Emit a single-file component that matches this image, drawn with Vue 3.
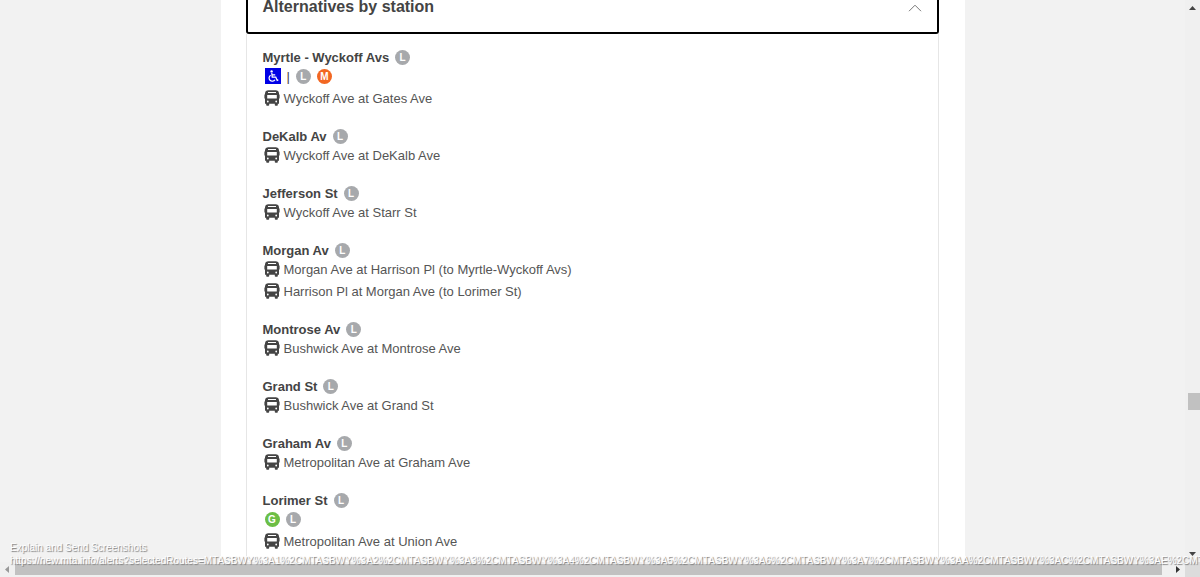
<template>
  <div class="window">
    <main class="viewport">
      <div class="page">
        <section class="accordion">
          <button class="accordion-header" type="button" :aria-expanded="open" @click="toggle">
            <span class="accordion-title">Alternatives by station</span>
            <svg class="chevron" :class="{ closed: !open }" viewBox="0 0 14 8" aria-hidden="true">
              <path d="M1 7.2 L7 1.2 L13 7.2" fill="none" stroke="#777" stroke-width="1" />
            </svg>
          </button>

          <div v-if="open" class="accordion-body">
            <article v-for="station in stations" :key="station.name" class="station">
              <h3 class="station-name">
                {{ station.name }}
                <span class="route line-l">L</span>
              </h3>
              <div v-if="station.transfers" class="transfers">
                <template v-if="station.accessible">
                  <svg class="accessible" viewBox="0 0 16 16" role="img" aria-label="Accessible">
                    <rect width="16" height="16" fill="#0000e6" />
                    <circle cx="6.6" cy="3.4" r="1.2" fill="#fff" />
                    <path
                      d="M6.8 5 L7.2 9.2 H10.8 L12.2 12.4 L13.3 11.9 M7 6.9 H10.2"
                      fill="none"
                      stroke="#fff"
                      stroke-width="1.2"
                    />
                    <path
                      d="M5.6 7.3 A3.2 3.2 0 1 0 10 11.7"
                      fill="none"
                      stroke="#fff"
                      stroke-width="1.2"
                    />
                  </svg>
                  <span class="divider">|</span>
                </template>
                <span
                  v-for="route in station.transfers"
                  :key="route"
                  class="route"
                  :class="`line-${route.toLowerCase()}`"
                >{{ route }}</span>
              </div>
              <p v-for="stop in station.stops" :key="stop" class="stop">
                <svg class="bus" viewBox="0 0 16 16" aria-hidden="true">
                  <path
                    fill="#444"
                    fill-rule="evenodd"
                    d="M4 0.3 H12 Q14.8 0.6 15 3 V4.5 H15.6 V8.5 H15 V13.8 H13.8 V15 Q13.8 15.8 13 15.8 H11.6 Q10.8 15.8 10.8 15 V13.8 H5.2 V15 Q5.2 15.8 4.4 15.8 H3 Q2.2 15.8 2.2 15 V13.8 H1 V8.5 H0.4 V4.5 H1 V3 Q1.2 0.6 4 0.3 Z M4 1.9 V2.9 H12 V1.9 Z M3.2 5 V8.6 H12.8 V5 Z M3.8 10.6 A0.9 0.9 0 1 0 3.8 12.4 A0.9 0.9 0 1 0 3.8 10.6 Z M12.2 10.6 A0.9 0.9 0 1 0 12.2 12.4 A0.9 0.9 0 1 0 12.2 10.6 Z"
                  />
                </svg>
                <span>{{ stop }}</span>
              </p>
            </article>
          </div>
        </section>
      </div>
    </main>

    <div class="scroll-y" aria-hidden="true">
      <svg class="arrow" viewBox="0 0 15 15"><path d="M4 10 L7.5 6 L11 10 Z" fill="#444" /></svg>
      <div class="track-y">
        <div class="thumb-y"></div>
      </div>
      <svg class="arrow" viewBox="0 0 15 15"><path d="M4 5 L7.5 9 L11 5 Z" fill="#444" /></svg>
    </div>

    <div class="scroll-x" aria-hidden="true">
      <svg class="arrow" viewBox="0 0 15 15"><path d="M9 4 L5 7.5 L9 11 Z" fill="#999" /></svg>
      <div class="thumb-x"></div>
      <svg class="arrow" viewBox="0 0 15 15"><path d="M6 4 L10 7.5 L6 11 Z" fill="#333" /></svg>
    </div>
    <div class="corner"></div>

    <div class="caption">
      <div>Explain and Send Screenshots</div>
      <div>{{ pageUrl }}</div>
    </div>
  </div>
</template>

<script setup>
import { ref } from 'vue';

const open = ref(true);

const toggle = () => {
  open.value = !open.value;
};

const stations = [
  {
    name: 'Myrtle - Wyckoff Avs',
    accessible: true,
    transfers: ['L', 'M'],
    stops: ['Wyckoff Ave at Gates Ave']
  },
  { name: 'DeKalb Av', stops: ['Wyckoff Ave at DeKalb Ave'] },
  { name: 'Jefferson St', stops: ['Wyckoff Ave at Starr St'] },
  {
    name: 'Morgan Av',
    stops: [
      'Morgan Ave at Harrison Pl (to Myrtle-Wyckoff Avs)',
      'Harrison Pl at Morgan Ave (to Lorimer St)'
    ]
  },
  { name: 'Montrose Av', stops: ['Bushwick Ave at Montrose Ave'] },
  { name: 'Grand St', stops: ['Bushwick Ave at Grand St'] },
  { name: 'Graham Av', stops: ['Metropolitan Ave at Graham Ave'] },
  {
    name: 'Lorimer St',
    transfers: ['G', 'L'],
    stops: ['Metropolitan Ave at Union Ave']
  }
];

const routeIds = ['1', '2', '3', '4', '5', '6', '7', 'A', 'C', 'E', 'B'];
const pageUrl =
  'https://new.mta.info/alerts?selectedRoutes=' +
  routeIds.map((id) => `MTASBWY%3A${id}`).join('%2C');
</script>

<style>
body {
  margin: 0;
}
</style>

<style scoped>
.window {
  position: relative;
  display: grid;
  grid-template-columns: minmax(0, 1fr) 15px;
  grid-template-rows: minmax(0, 1fr) 15px;
  height: 100vh;
  overflow: hidden;
  background: #f2f2f2;
  color: #444;
  font-family: "Liberation Sans", Arial, sans-serif;
  font-size: 13px;
}

.viewport {
  display: flex;
  justify-content: center;
  overflow: hidden;
}

.page {
  box-sizing: border-box;
  display: flex;
  width: 100%;
  max-width: 744px;
  padding: 0 26px 0 25px;
  background: #fff;
}

.accordion {
  display: flex;
  flex: 1;
  flex-direction: column;
}

.accordion-header {
  display: flex;
  flex-shrink: 0;
  align-items: flex-start;
  justify-content: space-between;
  padding: 0 15px 18px;
  border: 2px solid #000;
  border-top: 0;
  border-radius: 0 0 3px 3px;
  background: #fff;
  color: #444;
  font-family: inherit;
  text-align: left;
  cursor: pointer;
}

.accordion-title {
  font-size: 16px;
  font-weight: 700;
  line-height: 14px;
}

.chevron {
  width: 14px;
  height: 8px;
  margin-top: 4px;
}

.chevron.closed {
  transform: rotate(180deg);
}

.accordion-body {
  display: flex;
  flex: 1;
  flex-direction: column;
  gap: 19px;
  padding: 15px 16px;
  border: 1px solid #e6e6e6;
  border-top: 0;
}

.station-name {
  display: flex;
  align-items: center;
  gap: 6px;
  height: 16px;
  margin: 0;
  font-size: 13px;
  font-weight: 700;
}

.route {
  width: 15px;
  height: 15px;
  border-radius: 50%;
  color: #fff;
  font-size: 10px;
  font-weight: 700;
  line-height: 15px;
  text-align: center;
}

.line-l {
  background: #a7a9ac;
}

.line-m {
  background: #f26722;
}

.line-g {
  background: #6cbe45;
}

.transfers {
  display: flex;
  align-items: center;
  gap: 6px;
  height: 22px;
  padding-left: 2px;
}

.accessible {
  width: 16px;
  height: 16px;
}

.stop {
  display: flex;
  align-items: center;
  gap: 4px;
  height: 22px;
  margin: 0;
  padding-left: 1px;
  color: #555;
  white-space: nowrap;
}

.bus {
  width: 16px;
  height: 16px;
}

.arrow {
  flex: none;
  width: 15px;
  height: 15px;
}

.scroll-y {
  display: flex;
  flex-direction: column;
  background: #f0f0f0;
}

.track-y {
  display: flex;
  flex: 1;
  flex-direction: column;
  align-items: flex-end;
}

.track-y::before {
  content: "";
  flex: 378;
}

.track-y::after {
  content: "";
  flex: 137;
}

.thumb-y {
  width: 12px;
  height: 17px;
  background: #c1c1c1;
}

.scroll-x {
  display: flex;
  align-items: center;
  background: #f0f0f0;
}

.thumb-x {
  flex: 1;
  height: 11px;
  margin-right: 8px;
  background: #c1c1c1;
}

.corner {
  background: #dcdcdc;
}

/* browser capture caption, lies over the page and the scroll bar */
.caption {
  position: absolute;
  right: 0;
  bottom: 10px;
  left: 10px;
  overflow: hidden;
  color: #fff;
  font-size: 10px;
  line-height: 13px;
  text-shadow: 1px 1px 1px #777;
  white-space: nowrap;
  pointer-events: none;
}
</style>
